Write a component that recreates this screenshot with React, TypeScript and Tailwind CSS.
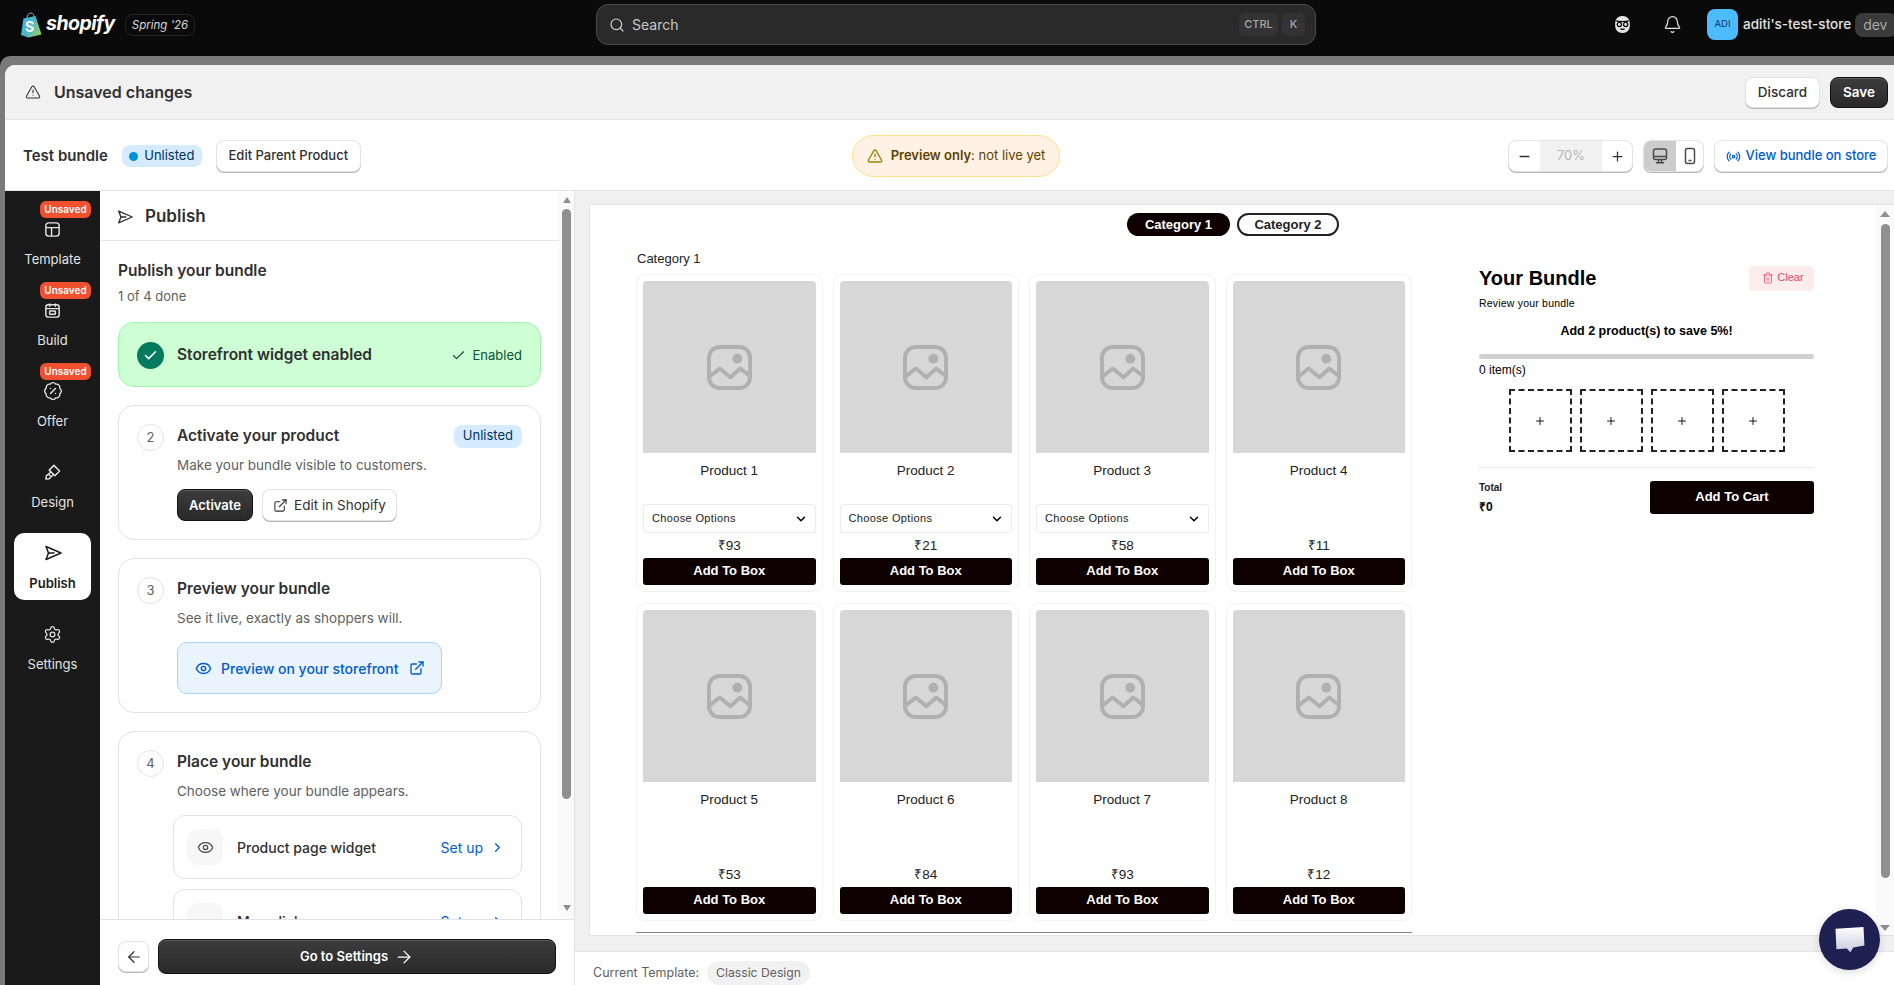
import React from "react";
import {
  ArrowLeft,
  ArrowRight,
  BadgePercent,
  Bell,
  Check,
  ChevronDown,
  ChevronRight,
  ExternalLink,
  Eye,
  Minus,
  Plus,
  Radio,
  Search,
  Settings,
  Trash2,
  TriangleAlert,
} from "lucide-react";

const SendIcon = ({ className }: { className?: string }) => (
  <svg viewBox="0 0 20 20" fill="none" stroke="currentColor" strokeWidth="1.5" strokeLinejoin="round" strokeLinecap="round" className={className}>
    <path d="M3 3.5 18 10 3 16.5 5.5 10Z" />
    <path d="M5.5 10H11" />
  </svg>
);

const TemplateIcon = ({ className }: { className?: string }) => (
  <svg viewBox="0 0 20 20" fill="none" stroke="currentColor" strokeWidth="1.5" className={className}>
    <rect x="3" y="3" width="14" height="14" rx="3" />
    <path d="M3 8h14M9 8v9" />
  </svg>
);

const BuildIcon = ({ className }: { className?: string }) => (
  <svg viewBox="0 0 20 20" fill="none" stroke="currentColor" strokeWidth="1.5" className={className}>
    <rect x="3" y="4" width="14" height="13" rx="2.5" />
    <path d="M3 8h14M7 2.5V6M13 2.5V6" />
    <rect x="7" y="10.5" width="6" height="3.5" rx="0.5" />
  </svg>
);

const BrushIcon = ({ className }: { className?: string }) => (
  <svg viewBox="0 0 20 20" fill="none" stroke="currentColor" strokeWidth="1.5" strokeLinejoin="round" className={className}>
    <path d="M11.5 2.5 17.5 8.5 12.5 13.5 6.5 7.5Z" />
    <path d="M8.5 9.5 3.5 13.5 3 17l3.5-.5 4.5-4.5" />
    <path d="M6 11.8 8 14" />
  </svg>
);

const DesktopIcon = () => (
  <svg viewBox="0 0 18 18" className="h-[18px] w-[18px]" fill="none" stroke="#4a4a4a" strokeWidth="1.5">
    <rect x="2.5" y="2" width="13" height="10.5" rx="2" />
    <path d="M2.5 9.5h13" />
    <path d="M7.5 12.5v3M10.5 12.5v3M5 15.75h8" />
  </svg>
);

const PhoneIcon = () => (
  <svg viewBox="0 0 18 18" className="h-[18px] w-[18px]" fill="none" stroke="#4a4a4a" strokeWidth="1.5">
    <rect x="4.5" y="1.5" width="9" height="15" rx="2" />
    <path d="M7.5 13.5h3" />
  </svg>
);

const ImagePlaceholder = () => (
  <svg viewBox="0 0 46 46" fill="none" stroke="#b0b0b0" strokeWidth="4" className="h-[45px] w-[45px]">
    <rect x="2" y="2" width="42" height="42" rx="11" />
    <path d="M3 32 13 24 24 33 34 24 44 32" strokeLinejoin="round" />
    <circle cx="31" cy="14" r="5" fill="#b0b0b0" stroke="none" />
  </svg>
);

const ShopifyBag = () => (
  <svg viewBox="0 0 22 26" className="h-[26px] w-[22px]">
    <defs>
      <linearGradient id="bag" x1="0" y1="0" x2="1" y2="0.6">
        <stop offset="0" stopColor="#3fb4ea" />
        <stop offset="0.55" stopColor="#4db6c9" />
        <stop offset="1" stopColor="#8ccf6a" />
      </linearGradient>
    </defs>
    <path d="M7 6c0-3 2-5 4-5s3 2 3 4" fill="none" stroke="#7fb4d8" strokeWidth="1" />
    <path d="M1 23 3.4 6.5 15.5 4 21.5 22.5 8.5 25.5Z" fill="url(#bag)" />
    <text x="5" y="20" fill="#fff" fontSize="14" fontWeight="700" fontFamily="Inter, sans-serif">S</text>
  </svg>
);

const FaceIcon = () => (
  <svg viewBox="0 0 20 20" className="h-[21px] w-[21px]" fill="none">
    <rect x="3" y="2" width="14" height="16" rx="6.5" fill="#e3e3e3" />
    <path d="M4 6.5c3 1 9 1 12 0" stroke="#0a0a0a" strokeWidth="1.2" />
    <circle cx="7" cy="10" r="2" stroke="#0a0a0a" strokeWidth="1.2" />
    <circle cx="13" cy="10" r="2" stroke="#0a0a0a" strokeWidth="1.2" />
    <path d="M8 14.5h4" stroke="#0a0a0a" strokeWidth="1.3" />
  </svg>
);

const whiteBtn = "flex items-center justify-center rounded-[8px] border border-[#e3e3e3] bg-white shadow-[0_1px_0_0_#b5b5b5] text-[#303030]";
const darkBtn = "flex items-center justify-center rounded-[8px] border border-[#111] bg-gradient-to-b from-[#3c3c3c] to-[#2a2a2a] text-white font-semibold shadow-[inset_0_1px_0_#5a5a5a]";

const navItems = [
  { label: "Template", icon: <TemplateIcon className="h-[19px] w-[19px]" />, unsaved: true },
  { label: "Build", icon: <BuildIcon className="h-[19px] w-[19px]" />, unsaved: true },
  { label: "Offer", icon: <BadgePercent className="h-[20px] w-[20px]" strokeWidth={1.6} />, unsaved: true },
  { label: "Design", icon: <BrushIcon className="h-[19px] w-[19px]" />, unsaved: false },
  { label: "Publish", icon: <SendIcon className="h-[20px] w-[20px]" />, unsaved: false, active: true },
  { label: "Settings", icon: <Settings className="h-[19px] w-[19px]" strokeWidth={1.6} />, unsaved: false },
];

const products = [
  { name: "Product 1", price: 93, options: true },
  { name: "Product 2", price: 21, options: true },
  { name: "Product 3", price: 58, options: true },
  { name: "Product 4", price: 11, options: false },
  { name: "Product 5", price: 53, options: false },
  { name: "Product 6", price: 84, options: false },
  { name: "Product 7", price: 93, options: false },
  { name: "Product 8", price: 12, options: false },
];

function TopBar() {
  return (
    <header className="flex h-[56px] shrink-0 items-center bg-[#0a0a0a] pb-[7px] text-white">
      <div className="ml-[20px] flex w-[576px] shrink-0 items-center">
        <ShopifyBag />
        <span className="ml-[4px] pb-[1px] text-[19.5px] font-bold italic leading-none tracking-[-0.5px]">shopify</span>
        <span className="ml-[10px] rounded-[8px] border border-[#262626] px-[6px] py-[3px] text-[11.5px] italic leading-[14px] text-[#d8d8d8]">Spring '26</span>
      </div>
      <div className="flex h-[41px] w-[720px] shrink-0 items-center rounded-[12px] border border-[#4a4a4a] bg-[#2a2a2a] pl-[12px] pr-[10px]">
        <Search className="h-[16px] w-[16px] text-[#d0d0d0]" strokeWidth={1.8} />
        <span className="ml-[7px] text-[14px] text-[#c8c8c8]">Search</span>
        <span className="ml-auto flex h-[23px] w-[39px] items-center justify-center rounded-[5px] bg-[#333] text-[11px] font-medium text-[#a8a8a8]">CTRL</span>
        <span className="ml-[4px] flex h-[23px] w-[23px] items-center justify-center rounded-[5px] bg-[#333] text-[11px] font-medium text-[#a8a8a8]">K</span>
      </div>
      <div className="ml-[296px] shrink-0"><FaceIcon /></div>
      <Bell className="ml-[30px] h-[19px] w-[19px] shrink-0 text-[#e3e3e3]" strokeWidth={1.5} />
      <div className="ml-[25px] flex h-[31px] w-[31px] shrink-0 items-center justify-center rounded-[8px] bg-[#4dbbff] text-[9.5px] text-[#0f3a5c]">ADI</div>
      <span className="ml-[5px] shrink-0 whitespace-nowrap text-[13.5px] font-medium text-[#e3e3e3]">aditi's-test-store</span>
      <span className="ml-[4px] shrink-0 rounded-[8px] bg-[#3a3a3a] py-[3px] pl-[8px] pr-[9px] text-[14px] leading-[18px] text-[#a8a8a8]">dev</span>
    </header>
  );
}

function Sidebar() {
  return (
    <nav className="flex w-[95px] shrink-0 flex-col gap-[14px] bg-[#1a1a1a] px-[9px] pt-[18px]">
      {navItems.map((item) => (
        <div
          key={item.label}
          className={
            item.active
              ? "relative flex h-[67px] flex-col items-center rounded-[10px] bg-white pt-[10px] text-[#1a1a1a]"
              : "relative flex h-[67px] flex-col items-center pt-[10px] text-[#e3e3e3]"
          }
        >
          {item.unsaved && (
            <span className="absolute right-0 top-[-8px] flex h-[17px] w-[51px] items-center justify-center rounded-[6px] bg-[#ee5030] text-[10px] font-semibold text-white">
              Unsaved
            </span>
          )}
          <span className="flex h-[20px] items-center">{item.icon}</span>
          <span className={item.active ? "mt-[10px] text-[13px] font-semibold leading-[20px]" : "mt-[10px] text-[13px] leading-[20px]"}>
            {item.label}
          </span>
        </div>
      ))}
    </nav>
  );
}

const Step = ({ n }: { n: number }) => (
  <span className="flex h-[27px] w-[27px] shrink-0 items-center justify-center rounded-full border border-[#e3e3e3] text-[13px] text-[#616161]">{n}</span>
);

const SetupRow = ({ label, icon }: { label: string; icon?: React.ReactNode }) => (
  <div className="flex h-[64px] w-[349px] shrink-0 items-center rounded-[12px] border border-[#e3e3e3] pl-[13px] pr-[16px]">
    <span className="flex h-[36px] w-[36px] items-center justify-center rounded-[10px] bg-[#f7f7f7] text-[#4a4a4a]">{icon}</span>
    <span className="ml-[14px] text-[14px] font-medium text-[#303030]">{label}</span>
    <span className="ml-auto text-[14px] text-[#005bd3]">Set up</span>
    <ChevronRight className="ml-[7px] h-[15px] w-[15px] text-[#005bd3]" strokeWidth={2} />
  </div>
);

function PublishPanel() {
  return (
    <section className="flex w-[475px] shrink-0 flex-col border-r border-[#e3e3e3] bg-white">
      <div className="flex min-h-0 flex-1">
        <div className="flex w-[459px] shrink-0 flex-col overflow-hidden">
          <div className="flex h-[50px] shrink-0 items-center border-b border-[#e8e8e8] pl-[16px] pt-[2px] text-[#303030]">
            <SendIcon className="h-[18px] w-[18px]" />
            <span className="ml-[11px] text-[17px] font-semibold">Publish</span>
          </div>
          <div className="flex flex-col px-[18px] pt-[18px]">
            <h2 className="text-[15.5px] font-semibold leading-[24px] text-[#303030]">Publish your bundle</h2>
            <p className="mt-[3px] text-[13px] leading-[20px] text-[#616161]">1 of 4 done</p>

            <div className="mt-[16px] flex h-[65px] items-center rounded-[16px] border border-[#9ef5ad] bg-[#cdfed4] pl-[18px] pr-[18px] pt-[1px]">
              <span className="flex h-[27px] w-[27px] items-center justify-center rounded-full bg-[#047b5d] text-white">
                <Check className="h-[15px] w-[15px]" strokeWidth={2.5} />
              </span>
              <span className="ml-[13px] text-[15.5px] font-semibold text-[#303030]">Storefront widget enabled</span>
              <Check className="ml-auto h-[15px] w-[15px] text-[#0c5132]" strokeWidth={1.8} />
              <span className="ml-[7px] mt-[2px] text-[13px] text-[#0c5132]">Enabled</span>
            </div>

            <div className="mt-[18px] flex gap-[13px] rounded-[16px] border border-[#e3e3e3] p-[18px]">
              <Step n={2} />
              <div className="flex-1">
                <div className="flex items-center justify-between">
                  <h3 className="text-[15.5px] font-semibold leading-[24px] text-[#303030]">Activate your product</h3>
                  <span className="flex h-[23px] items-center rounded-[8px] bg-[#d5ebff] px-[9px] text-[13px] text-[#00325c]">Unlisted</span>
                </div>
                <p className="mt-[7px] text-[13.5px] leading-[20px] text-[#616161]">Make your bundle visible to customers.</p>
                <div className="mt-[14px] flex gap-[9px]">
                  <button className={`${darkBtn} h-[32px] w-[76px] pt-[1px] text-[13px]`}>Activate</button>
                  <button className={`${whiteBtn} h-[32px] w-[135px] pt-[1px] text-[13.5px]`}>
                    <ExternalLink className="mr-[6px] h-[15px] w-[15px]" strokeWidth={1.7} />
                    Edit in Shopify
                  </button>
                </div>
              </div>
            </div>

            <div className="mt-[18px] flex gap-[13px] rounded-[16px] border border-[#e3e3e3] p-[18px]">
              <Step n={3} />
              <div className="flex-1">
                <h3 className="text-[15.5px] font-semibold leading-[24px] text-[#303030]">Preview your bundle</h3>
                <p className="mt-[7px] text-[13.5px] leading-[20px] text-[#616161]">See it live, exactly as shoppers will.</p>
                <button className="mt-[14px] flex h-[52px] w-[265px] items-center rounded-[10px] border border-[#a6d4ff] bg-[#eaf4ff] pl-[17px] text-[14px] font-medium text-[#005bd3]">
                  <Eye className="h-[17px] w-[17px]" strokeWidth={2} />
                  <span className="ml-[9px]">Preview on your storefront</span>
                  <ExternalLink className="ml-[10px] h-[16px] w-[16px]" strokeWidth={2} />
                </button>
              </div>
            </div>

            <div className="mt-[18px] flex gap-[13px] rounded-[16px] border border-[#e3e3e3] p-[18px]">
              <Step n={4} />
              <div className="flex-1">
                <h3 className="text-[15.5px] font-semibold leading-[24px] text-[#303030]">Place your bundle</h3>
                <p className="mt-[7px] text-[13.5px] leading-[20px] text-[#616161]">Choose where your bundle appears.</p>
                <div className="-ml-[4px] mt-[14px] flex flex-col gap-[10px]">
                  <SetupRow label="Product page widget" icon={<Eye className="h-[17px] w-[17px]" strokeWidth={1.8} />} />
                  <SetupRow label="Menu link" />
                </div>
              </div>
            </div>
          </div>
        </div>
        <div className="flex w-[15px] shrink-0 flex-col items-center bg-[#fafafa] pt-[6px]">
          <span className="h-0 w-0 border-x-[4px] border-b-[6px] border-x-transparent border-b-[#8f8f8f]" />
          <span className="mt-[6px] h-[590px] w-[9px] rounded-full bg-[#8f8f8f]" />
          <span className="mt-[106px] h-0 w-0 border-x-[4px] border-t-[6px] border-x-transparent border-t-[#8f8f8f]" />
        </div>
      </div>
      <div className="flex h-[66px] shrink-0 items-center gap-[9px] border-t border-[#e3e3e3] pl-[18px] pt-[8px]">
        <button className={`${whiteBtn} h-[31px] w-[31px]`}>
          <ArrowLeft className="h-[18px] w-[18px]" strokeWidth={1.6} />
        </button>
        <button className={`${darkBtn} h-[35px] w-[398px] text-[13px]`}>
          Go to Settings
          <ArrowRight className="ml-[6px] h-[20px] w-[20px]" strokeWidth={1.5} />
        </button>
      </div>
    </section>
  );
}

function ProductCard({ name, price, options }: { name: string; price: number; options: boolean }) {
  return (
    <div className="flex flex-col rounded-[10px] border border-[#f2f2f2] p-[6px]">
      <div className="flex h-[172px] items-center justify-center rounded-t-[4px] bg-[#d7d7d7]">
        <ImagePlaceholder />
      </div>
      <p className="mt-[10px] text-center text-[13.5px] leading-[16px] text-[#222]">{name}</p>
      {options ? (
        <div className="mt-[25px] flex h-[29px] items-center justify-between rounded-[3px] border border-[#ececec] pl-[8px] pr-[7px] text-[11px] tracking-[0.35px] text-[#222]">
          Choose Options
          <ChevronDown className="h-[14px] w-[14px] text-black" strokeWidth={2.5} />
        </div>
      ) : (
        <div className="mt-[25px] h-[29px]" />
      )}
      <p className="mt-[5px] text-center text-[13.5px] leading-[16px] text-[#222]">₹{price}</p>
      <button className="mt-[4px] h-[27px] rounded-[3px] bg-[#0f0000] pb-[2px] text-[13px] font-bold text-white">Add To Box</button>
    </div>
  );
}

function BundleSummary() {
  return (
    <aside className="ml-[67px] w-[335px] shrink-0 pt-[30px] text-black">
      <div className="flex items-start justify-between">
        <h2 className="pt-[1px] text-[20px] font-bold leading-[23px]">Your Bundle</h2>
        <button className="flex h-[25px] w-[65px] items-start justify-center gap-[3px] rounded-[4px] bg-[#fdecec] pl-[3px] pt-[3px] text-[11px] text-[#d94a68]">
          <Trash2 className="mt-[3px] h-[12px] w-[12px]" strokeWidth={1.5} />
          Clear
        </button>
      </div>
      <p className="mt-[5px] text-[10.5px] leading-[14px] tracking-[0.2px]">Review your bundle</p>
      <p className="mt-[13px] text-center text-[12.5px] font-bold leading-[16px]">Add 2 product(s) to save 5%!</p>
      <div className="mt-[15px] h-[5px] rounded-full bg-[#d0d0d0]" />
      <p className="mt-[4px] text-[12px] leading-[14px]">0 item(s)</p>
      <div className="mt-[12px] flex justify-center gap-[8px]">
        {[0, 1, 2, 3].map((i) => (
          <div key={i} className="flex h-[63px] w-[63px] items-center justify-center border-2 border-dashed border-[#222]">
            <Plus className="h-[12px] w-[12px]" strokeWidth={1.8} />
          </div>
        ))}
      </div>
      <div className="mt-[15px] h-px bg-[#ececec]" />
      <div className="mt-[13px] flex justify-between">
        <div>
          <p className="text-[10px] font-bold leading-[14px] text-[#222]">Total</p>
          <p className="mt-[4px] text-[12px] font-bold leading-[16px]">₹0</p>
        </div>
        <button className="h-[33px] w-[164px] rounded-[3px] bg-[#0f0000] pb-[2px] text-[13px] font-bold text-white">Add To Cart</button>
      </div>
    </aside>
  );
}

function Preview() {
  return (
    <section className="flex min-w-0 flex-1 flex-col bg-[#f0f0f0]">
      <div className="flex min-h-0 flex-1 pb-[15px] pl-[14px] pt-[13px]">
        <div className="flex min-w-0 flex-1 border-y border-l border-[#e3e3e3] bg-white font-['Liberation_Sans',Arial,sans-serif]">
          <div className="min-w-0 flex-1">
            <div className="mt-[8px] flex justify-center gap-[7px]">
              <span className="flex h-[23px] w-[103px] items-center justify-center rounded-full bg-[#0f0000] text-[13px] font-bold text-white">Category 1</span>
              <span className="flex h-[23px] w-[102px] items-center justify-center rounded-full border-2 border-[#222] text-[13px] font-bold text-[#222]">Category 2</span>
            </div>
            <div className="flex">
              <div className="ml-[46px] w-[776px] shrink-0">
                <p className="mt-[15px] pl-[1px] text-[13px] leading-[16px] text-[#222]">Category 1</p>
                <div className="mt-[7px] grid grid-cols-4 gap-x-[10px] gap-y-[11px]">
                  {products.map((p) => (
                    <ProductCard key={p.name} {...p} />
                  ))}
                </div>
                <div className="mt-[11px] h-px bg-[#808080]" />
              </div>
              <BundleSummary />
            </div>
          </div>
          <div className="flex w-[18px] shrink-0 flex-col items-center bg-[#fafafa] pt-[6px]">
            <span className="h-0 w-0 border-x-[5px] border-b-[6px] border-x-transparent border-b-[#8f8f8f]" />
            <span className="mt-[7px] h-[654px] w-[9px] rounded-full bg-[#8f8f8f]" />
            <span className="mt-[47px] h-0 w-0 border-x-[5px] border-t-[6px] border-x-transparent border-t-[#8f8f8f]" />
          </div>
        </div>
      </div>
      <div className="flex h-[34px] shrink-0 items-center border-t border-[#e3e3e3] bg-white pl-[18px] pt-[9px] text-[12.5px] text-[#616161]">
        Current Template:
        <span className="ml-[8px] flex h-[24px] items-center rounded-full bg-[#f1f1f1] px-[9px] text-[12.2px]">Classic Design</span>
      </div>
    </section>
  );
}

export default function App() {
  return (
    <div className="relative flex h-screen w-screen flex-col overflow-hidden bg-[#0a0a0a] font-['Inter',sans-serif]">
      <TopBar />
      <div className="flex min-h-0 flex-1 flex-col rounded-tl-[10px] bg-[#7a7a7a] pl-[5px] pt-[9px]">
        <div className="flex min-h-0 flex-1 flex-col overflow-hidden rounded-tl-[10px] bg-white">
          <div className="flex h-[55px] shrink-0 items-center border-b border-[#e3e3e3] bg-[#f1f1f1] pl-[20px] pr-[6px]">
            <TriangleAlert className="h-[16px] w-[16px] text-[#303030]" strokeWidth={1.6} />
            <span className="ml-[13px] text-[16px] font-semibold text-[#303030]">Unsaved changes</span>
            <button className={`${whiteBtn} ml-auto h-[31px] w-[75px] text-[13.5px] font-medium`}>Discard</button>
            <button className={`${darkBtn} ml-[10px] h-[31px] w-[58px] text-[13.5px]`}>Save</button>
          </div>
          <div className="flex h-[71px] shrink-0 items-center border-b border-[#e3e3e3] pl-[18px] pr-[6px] pt-[2px]">
            <div className="flex w-[829px] shrink-0 items-center">
              <span className="text-[15px] font-semibold text-[#303030]">Test bundle</span>
              <span className="ml-[14px] flex h-[22px] w-[80px] items-center justify-center rounded-[8px] bg-[#d5ebff] text-[13px] text-[#00325c]">
                <span className="mr-[6px] h-[9px] w-[9px] rounded-full bg-[#0094d5]" />
                Unlisted
              </span>
              <button className={`${whiteBtn} ml-[14px] h-[32px] w-[145px] text-[13px] font-medium`}>Edit Parent Product</button>
            </div>
            <div className="flex h-[42px] w-[208px] shrink-0 items-center justify-center rounded-full border border-[#ffe08a] bg-[#fff1e3] text-[13px] text-[#5e4200]">
              <TriangleAlert className="mr-[8px] h-[16px] w-[16px] text-[#9c8400]" strokeWidth={2} />
              <span className="font-semibold">Preview only</span>: not live yet
            </div>
            <div className="ml-auto flex items-center">
              <div className={`${whiteBtn} h-[32px] w-[125px] overflow-hidden`}>
                <span className="flex h-full w-[31px] items-center justify-center"><Minus className="h-[15px] w-[15px]" strokeWidth={2.2} /></span>
                <span className="flex h-full flex-1 items-center justify-center bg-[#f1f1f1] text-[13px] text-[#b5b5b5]">70%</span>
                <span className="flex h-full w-[30px] items-center justify-center"><Plus className="h-[15px] w-[15px]" strokeWidth={2} /></span>
              </div>
              <div className={`${whiteBtn} ml-[10px] h-[32px] w-[61px] overflow-hidden`}>
                <span className="flex h-full w-[32px] items-center justify-center bg-[#cccccc]"><DesktopIcon /></span>
                <span className="flex h-full flex-1 items-center justify-center"><PhoneIcon /></span>
              </div>
              <button className={`${whiteBtn} ml-[10px] h-[32px] w-[174px] text-[13px] font-medium !text-[#005bd3]`}>
                <Radio className="mr-[5px] h-[15px] w-[15px]" strokeWidth={2} />
                View bundle on store
              </button>
            </div>
          </div>
          <div className="flex min-h-0 flex-1">
            <Sidebar />
            <PublishPanel />
            <Preview />
          </div>
        </div>
      </div>
      <div className="absolute left-[1819px] top-[909px] flex h-[61px] w-[61px] items-center justify-center rounded-full bg-[#1e2052] shadow-[0_2px_10px_rgba(0,0,0,0.15)]">
        <svg viewBox="0 0 34 30" className="h-[28px] w-[33px]">
          <defs>
            <linearGradient id="chat" x1="0" y1="0" x2="0" y2="1">
              <stop offset="0" stopColor="#ffffff" />
              <stop offset="1" stopColor="#c9c9dc" />
            </linearGradient>
          </defs>
          <path d="M2 3 32 1 33 21 21 23 18 28 14 24 3 25Z" fill="url(#chat)" strokeLinejoin="round" />
        </svg>
      </div>
    </div>
  );
}
